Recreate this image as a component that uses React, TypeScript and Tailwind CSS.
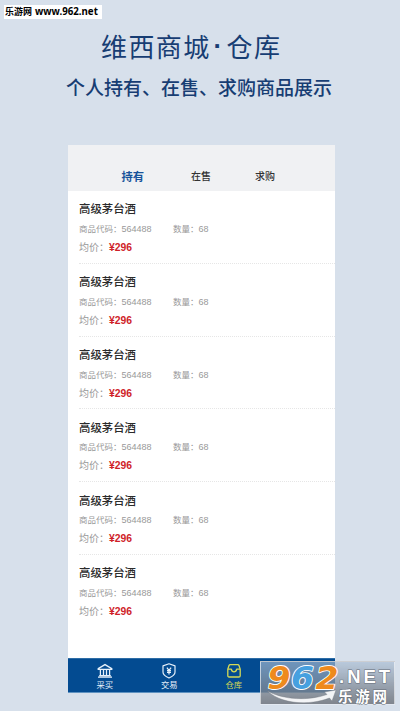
import type { ReactNode } from "react";

const items = Array.from({ length: 6 }, (_, id) => ({
  id,
  name: "高级茅台酒",
  code: "564488",
  count: 68,
  price: 296,
}));

const BankIcon = () => (
  <svg width="16" height="16" viewBox="0 0 16 16" fill="none" stroke="currentColor" strokeWidth="1.250">
    <path d="M1.2 5.6 8 1.6l6.800 4v.7H1.200zM1 14.200h14M2.200 12.600h11.600M3.400 6.500v6M6.500 6.500v6M9.500 6.500v6M12.600 6.500v6" />
  </svg>
);

const ShieldIcon = () => (
  <svg width="16" height="16" viewBox="0 0 16 16" fill="none" stroke="currentColor" strokeWidth="1.200">
    <path d="M8 .8 14 2.900v6.300c0 2.500-2.700 4.300-6 5.800-3.300-1.500-6-3.300-6-5.800V2.900z" strokeLinejoin="round" />
    <path d="m5.900 4.600 2.100 2.800 2.100-2.800M8 7.400v4M6 7.700h4M6 9.400h4" />
  </svg>
);

const BoxIcon = () => (
  <svg width="16" height="16" viewBox="0 0 16 16" fill="none" stroke="currentColor" strokeWidth="1.300" strokeLinejoin="round">
    <path d="M4.200 1.700h7.600c.6 0 1 .3 1.200.8l1.200 3.700v6.500c0 .8-.5 1.300-1.300 1.300H3.100c-.8 0-1.300-.5-1.300-1.300V6.200L3 2.500c.2-.5.6-.8 1.200-.8z" />
    <path d="M1.900 6.200h3.400C5.600 8 6.600 8.900 8 8.900s2.400-.9 2.700-2.700h3.400" />
  </svg>
);

const NavItem = ({ icon, label, active }: { icon: ReactNode; label: string; active?: boolean }) => (
  <div className={`flex w-[64.5px] flex-col items-center pt-[4px] ${active ? "text-[#d5d956]" : "text-[#e6f0fa]"}`}>
    {icon}
    <span className="text-[8.4px] leading-[12px]">{label}</span>
  </div>
);

const SiteLogo = () => (
  <div className="absolute left-[260px] top-[661px] h-[44px] w-[135px] border border-white/60 bg-linear-to-b from-[#a9bdd4]/65 to-[#70757d]/85">
    <svg className="absolute inset-0 overflow-visible" width="133" height="42" viewBox="0 0 133 42">
      <g
        fontFamily="DejaVu Sans, sans-serif"
        fontWeight="700"
        fontStyle="italic"
        fontSize="31.500"
        stroke="#fff"
        strokeWidth="1.800"
        paintOrder="stroke"
        strokeLinejoin="round"
      >
        <text x="6.500" y="26.500" textLength="23" lengthAdjust="spacingAndGlyphs" fill="#ee8a1d">9</text>
        <text x="30" y="26.500" textLength="23" lengthAdjust="spacingAndGlyphs" fill="#46a0df">6</text>
        <text x="54.500" y="26.500" textLength="23" lengthAdjust="spacingAndGlyphs" fill="#ee8a1d">2</text>
      </g>
      <path d="M6.500 29C22 38 48 39 66 32.500l-2.500-2.500L75 28l-4 11-2.500-3C48 44 20 42 6.500 29z" fill="#f3f4f6" stroke="#737982" strokeWidth=".4" />
      <g stroke="#666d76" strokeWidth="1" paintOrder="stroke" fill="#fff">
        <text x="78" y="21" fontFamily="Liberation Sans, sans-serif" fontWeight="700" fontSize="18.500" letterSpacing="3">.NET</text>
        <text x="77" y="39.500" fontFamily="Noto Sans CJK SC, sans-serif" fontWeight="700" fontSize="14.500" letterSpacing="2.800">乐游网</text>
      </g>
    </svg>
  </div>
);

export default function App() {
  return (
    <div className="relative h-[711px] w-[400px] overflow-hidden bg-[#d7e0eb] font-['Liberation_Sans','Noto_Sans_CJK_SC',sans-serif]">
      <div className="absolute left-[4px] top-[5px] flex h-[14px] w-[98px] items-center whitespace-nowrap bg-white pl-px font-['Noto_Sans_CJK_SC',sans-serif] text-[9px] font-bold leading-[14px] text-black">
        乐游网
        <span className="ml-[3px] font-['Noto_Sans',sans-serif] text-[9.700px]">www.962.net</span>
      </div>

      <header className="whitespace-nowrap pt-[28px] text-[#173d73]">
        <h1 className="flex pl-[101px] font-['Noto_Sans_CJK_SC',sans-serif] text-[26px] leading-[36px] tracking-[1.400px]">
          <span>维西商城</span>
          <span className="w-[16px] pl-[3px] font-['Liberation_Sans',sans-serif] font-bold">·</span>
          <span>仓库</span>
        </h1>
        <p className="mt-[9px] pl-[66px] font-['Noto_Sans_CJK_SC',sans-serif] text-[19px] font-medium leading-[28px]">个人持有、在售、求购商品展示</p>
      </header>

      <main className="ml-[68px] mt-[44px] flex h-[548px] w-[267px] flex-col bg-white">
        <div className="flex h-[46px] shrink-0 items-center bg-[#f0f1f3] pl-[53.500px] pt-[17px] text-[10px] font-medium leading-[14px] text-[#333]">
          <span className="w-[69.500px] text-[11.300px] font-bold text-[#17529a]">持有</span>
          <span className="w-[64px]">在售</span>
          <span>求购</span>
        </div>

        <div className="flex-1">
          {items.map((item) => (
            <div
              key={item.id}
              className="ml-[11px] h-[72.8px] border-b border-dotted border-[#e6e6e6] pt-[10.400px] last:border-transparent"
            >
              <h2 className="text-[11.400px] font-medium leading-[16px] text-[#2b2b2b]">{item.name}</h2>
              <div className="mt-[5.600px] flex text-[9px] leading-[12px] text-[#999]">
                <span className="flex w-[94px]">
                  <span className="w-[42.500px] text-[8.500px]">商品代码：</span>
                  {item.code}
                </span>
                <span className="flex">
                  <span className="text-[8.500px]">数量：</span>
                  {item.count}
                </span>
              </div>
              <div className="mt-[6px] flex text-[10px] leading-[14px] text-[#999]">
                <span className="w-[30px]">均价：</span>
                <span className="text-[10.400px] font-bold text-[#cf1f2a]">¥{item.price}</span>
              </div>
            </div>
          ))}
        </div>

        <nav className="flex h-[35px] shrink-0 border-y border-t-[#2e6da6] border-b-[#5f92c0] bg-[#034b91] pl-[4.500px]">
          <NavItem icon={<BankIcon />} label="采买" />
          <NavItem icon={<ShieldIcon />} label="交易" />
          <NavItem icon={<BoxIcon />} label="仓库" active />
        </nav>
      </main>

      <SiteLogo />
    </div>
  );
}
